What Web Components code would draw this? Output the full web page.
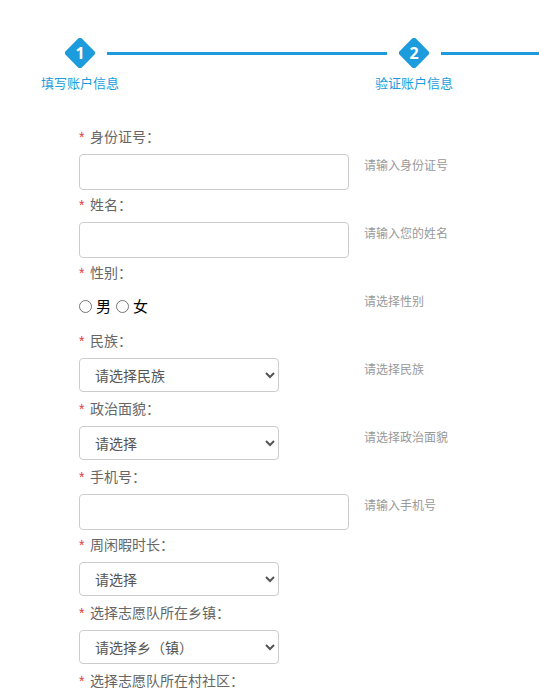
<!DOCTYPE html>
<html lang="zh-CN">
<head>
  <meta charset="UTF-8">
  <title>填写账户信息</title>
  <style>
    html, body { margin: 0; height: 695px; overflow: hidden; background: #fff; }
    body { font-family: "Open Sans", "Noto Sans CJK SC", sans-serif; }
    form-page { padding-left: 79px; }
  </style>
</head>
<body>
  <step-bar>
    <step-item num="1">填写账户信息</step-item>
    <step-line></step-line>
    <step-item num="2">验证账户信息</step-item>
    <step-line></step-line>
  </step-bar>
  <form-page>
    <form-row label="身份证号" hint="请输入身份证号"><text-field></text-field></form-row>
    <form-row label="姓名" hint="请输入您的姓名"><text-field></text-field></form-row>
    <form-row label="性别" hint="请选择性别"><radio-group options="男,女"></radio-group></form-row>
    <form-row label="民族" hint="请选择民族"><select-field text="请选择民族"></select-field></form-row>
    <form-row label="政治面貌" hint="请选择政治面貌"><select-field text="请选择"></select-field></form-row>
    <form-row label="手机号" hint="请输入手机号"><text-field></text-field></form-row>
    <form-row label="周闲暇时长"><select-field text="请选择"></select-field></form-row>
    <form-row label="选择志愿队所在乡镇"><select-field text="请选择乡（镇）"></select-field></form-row>
    <form-row label="选择志愿队所在村社区"></form-row>
  </form-page>

  <script>
    class StepBar extends HTMLElement {
      constructor() {
        super();
        this.attachShadow({ mode: 'open' });
        this.shadowRoot.innerHTML = `
          <style>
            :host { display: flex; align-items: flex-start; padding: 38px 0 0 53px; height: 84px; width: 486px; overflow: hidden; }
          </style>
          <slot></slot>
        `;
      }
    }

    class StepItem extends HTMLElement {
      constructor() {
        super();
        this.attachShadow({ mode: 'open' });
        this.shadowRoot.innerHTML = `
          <style>
            :host { display: flex; flex-direction: column; align-items: center; width: 54px; flex: none; }
            svg { display: block; width: 30px; height: 30px; }
            text { font: 700 16px "Open Sans", sans-serif; fill: #fff; }
            .name { margin-top: 6px; font-size: 13px; line-height: 18px; color: #1c9cdc; white-space: nowrap; }
          </style>
          <svg viewBox="0 0 30 30">
            <rect x="3.5" y="3.5" width="23" height="23" rx="3" fill="#1c9cdc" transform="rotate(45 15 15)"/>
            <text x="15" y="20.5" text-anchor="middle">${this.getAttribute('num')}</text>
          </svg>
          <div class="name"><slot></slot></div>
        `;
      }
    }

    class StepLine extends HTMLElement {
      constructor() {
        super();
        this.attachShadow({ mode: 'open' });
        this.shadowRoot.innerHTML = `
          <style>
            :host { display: block; width: 280px; height: 3px; margin-top: 14px; background: #1c9cdc; flex: none; }
          </style>
        `;
      }
    }

    class FormRow extends HTMLElement {
      constructor() {
        super();
        this.attachShadow({ mode: 'open' });
        const hint = this.getAttribute('hint') || '';
        this.shadowRoot.innerHTML = `
          <style>
            :host { display: block; height: 68px; overflow: hidden; }
            .label { height: 32px; line-height: 30px; font-size: 14px; color: #666; white-space: nowrap; }
            .star { font-family: "Liberation Sans", sans-serif; font-size: 14px; color: #e4393c; margin-right: 5.5px; }
            .body { display: flex; align-items: flex-start; }
            .field { width: 270px; flex: none; }
            .hint { margin-left: 15px; font-size: 12px; line-height: 24px; color: #999; white-space: nowrap; }
          </style>
          <div class="label"><span class="star">*</span>${this.getAttribute('label')}：</div>
          <div class="body">
            <div class="field"><slot></slot></div>
            <div class="hint">${hint}</div>
          </div>
        `;
      }
    }

    class TextField extends HTMLElement {
      constructor() {
        super();
        this.attachShadow({ mode: 'open' });
        this.shadowRoot.innerHTML = `
          <style>
            :host { display: block; }
            input {
              display: block; box-sizing: border-box; width: 270px; height: 36px;
              border: 1px solid #ccc; border-radius: 4px; background: #fff;
              padding: 0 12px; font-size: 14px; outline: none;
            }
          </style>
          <input type="text">
        `;
      }
    }

    class SelectField extends HTMLElement {
      constructor() {
        super();
        this.attachShadow({ mode: 'open' });
        this.shadowRoot.innerHTML = `
          <style>
            :host { display: block; }
            select {
              display: block; box-sizing: border-box; width: 200px; height: 34px;
              border: 1px solid #ccc; border-radius: 4px; background: #fff;
              padding: 0 12px 0 11px; color: #555; outline: none;
              font: 14px "Open Sans", "Noto Sans CJK SC", sans-serif;
            }
          </style>
          <select><option>${this.getAttribute('text')}</option></select>
        `;
      }
    }

    class RadioGroup extends HTMLElement {
      constructor() {
        super();
        this.attachShadow({ mode: 'open' });
        const items = this.getAttribute('options').split(',')
          .map(o => `<label><input type="radio" name="g">${o}</label>`).join('');
        this.shadowRoot.innerHTML = `
          <style>
            :host { display: block; height: 36px; }
            .wrap { display: flex; gap: 5px; height: 32px; align-items: center; font-size: 15px; line-height: 20px; color: #000; }
            label { display: flex; align-items: center; gap: 4px; }
            input { margin: 0; width: 13px; height: 13px; accent-color: #767676; }
          </style>
          <div class="wrap">${items}</div>
        `;
      }
    }

    class FormPage extends HTMLElement {
      constructor() {
        super();
        this.attachShadow({ mode: 'open' });
        this.shadowRoot.innerHTML = `
          <style>:host { display: block; height: 573px; overflow: hidden; }</style>
          <slot></slot>
        `;
      }
    }

    customElements.define('step-bar', StepBar);
    customElements.define('step-item', StepItem);
    customElements.define('step-line', StepLine);
    customElements.define('form-row', FormRow);
    customElements.define('text-field', TextField);
    customElements.define('select-field', SelectField);
    customElements.define('radio-group', RadioGroup);
    customElements.define('form-page', FormPage);
  </script>
</body>
</html>
